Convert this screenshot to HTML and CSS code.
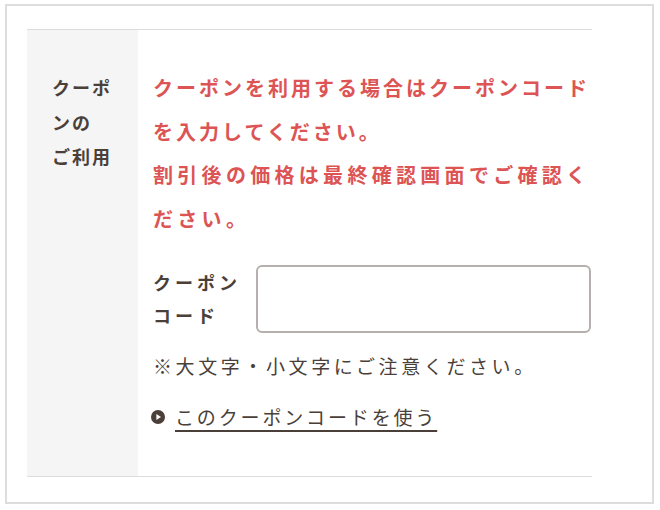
FILE: index.html
```html
<!DOCTYPE html>
<html lang="ja">
<head>
<meta charset="utf-8">
<title>クーポン</title>
<link rel="stylesheet" href="styles.css">
</head>
<body>
<div class="frame">
  <div class="table">
    <div class="th">クーポンの<br>ご利用</div>
    <div class="td">
      <div class="notice">
        <p class="notice-1">クーポンを利用する場合はクーポンコードを入力してください。</p>
        <p class="notice-2">割引後の価格は最終確認画面でご確認ください。</p>
      </div>
      <div class="coupon-row">
        <label class="coupon-label" for="code">クーポンコード</label>
        <input class="coupon-input" id="code" type="text">
      </div>
      <p class="note">※大文字・小文字にご注意ください。</p>
      <a class="use-link" href="#">
        <svg class="arrow" width="14" height="14" viewBox="0 0 14 14" aria-hidden="true"><circle cx="7" cy="7" r="7" fill="#4b3f3a"/><path d="M5.4 4.1 L10 7 L5.4 9.9 Z" fill="#fff"/></svg>
        <span class="link-text">このクーポンコードを使う</span>
      </a>
    </div>
  </div>
</div>
</body>
</html>
```
FILE: styles.css
```css
html, body {
  margin: 0;
  padding: 0;
  background: #fff;
}
body {
  font-family: "Noto Sans CJK JP", "Noto Sans", sans-serif;
  color: #4b3f3a;
}
p { margin: 0; }

.frame {
  margin: 4px 0 0 5px;
  border: 2px solid #dddddd;
  padding: 23px 60px 0 20px;
  width: 565px;
  height: 473px;
}

.table {
  display: flex;
  border-top: 1px solid #dddddd;
  border-bottom: 1px solid #dddddd;
  height: 446px;
}

.th {
  width: 111px;
  flex: none;
  box-sizing: border-box;
  background: #f5f5f5;
  padding: 40px 14px 0 25px;
  font-size: 18px;
  font-weight: 700;
  line-height: 34.5px;
  letter-spacing: 2px;
  color: #4b3f3a;
}

.td {
  flex: 1;
  padding: 36px 0 0 15px;
  display: flex;
  flex-direction: column;
  align-items: flex-start;
}

.notice {
  width: 439px;
  color: #dc5454;
  font-size: 20px;
  font-weight: 700;
  line-height: 43.5px;
}
.notice-1 { letter-spacing: 3px; }
.notice-2 { letter-spacing: 4.3px; }

.coupon-row {
  margin-top: 25px;
  display: flex;
  align-items: center;
  align-self: stretch;
}
.coupon-label {
  width: 103px;
  flex: none;
  font-size: 18px;
  font-weight: 700;
  line-height: 33px;
  letter-spacing: 4px;
}
.coupon-input {
  flex: 1;
  height: 68px;
  box-sizing: border-box;
  margin: 0 1px 0 0;
  border: 2px solid #b5b0ad;
  border-radius: 6px;
  background: #fff;
  font-size: 16px;
  padding: 0 10px;
}

.note {
  margin-top: 18px;
  font-size: 19px;
  line-height: 30px;
  letter-spacing: 3.6px;
}

.use-link {
  margin-top: 21px;
  display: flex;
  align-items: center;
  gap: 10px;
  color: #4b3f3a;
  text-decoration: none;
  font-size: 19px;
  line-height: 30px;
  letter-spacing: 2.85px;
}
.arrow {
  flex: none;
  margin-left: -2px;
}
.link-text {
  text-decoration: underline;
  text-decoration-thickness: 1.5px;
  text-underline-offset: 5px;
}
```
